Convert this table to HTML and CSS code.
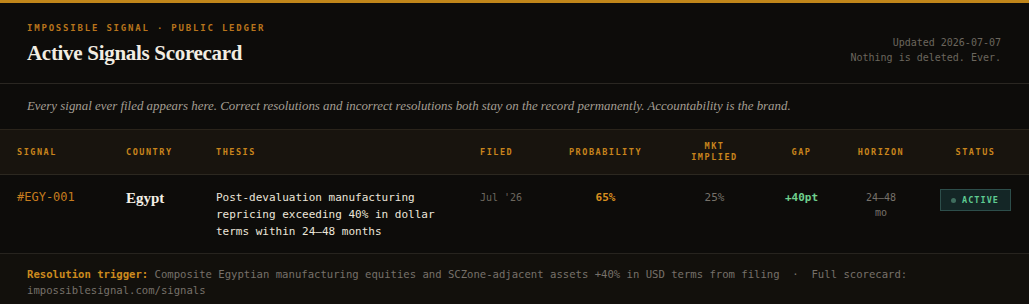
FILE: index.html
```html
<!DOCTYPE html>
<html lang="en">
<head>
<meta charset="utf-8">
<title>Active Signals Scorecard</title>
<link rel="stylesheet" href="styles.css">
</head>
<body>
<div class="page">
  <header class="top">
    <div class="brand">
      <div class="eyebrow">IMPOSSIBLE SIGNAL · PUBLIC LEDGER</div>
      <h1 class="title">Active Signals Scorecard</h1>
    </div>
    <div class="meta">
      <div>Updated 2026-07-07</div>
      <div>Nothing is deleted. Ever.</div>
    </div>
  </header>
  <p class="intro">Every signal ever filed appears here. Correct resolutions and incorrect resolutions both stay on the record permanently. Accountability is the brand.</p>
  <table class="ledger">
    <colgroup>
      <col class="c-signal"><col class="c-country"><col class="c-thesis"><col class="c-filed"><col class="c-prob"><col class="c-mkt"><col class="c-gap"><col class="c-hor"><col class="c-status">
    </colgroup>
    <thead>
      <tr>
        <th class="first left">SIGNAL</th>
        <th class="left">COUNTRY</th>
        <th class="left">THESIS</th>
        <th class="left">FILED</th>
        <th>PROBABILITY</th>
        <th>MKT<br>IMPLIED</th>
        <th>GAP</th>
        <th>HORIZON</th>
        <th>STATUS</th>
      </tr>
    </thead>
    <tbody>
      <tr>
        <td class="first left sig">#EGY-001</td>
        <td class="left country">Egypt</td>
        <td class="left thesis">Post-devaluation manufacturing repricing exceeding 40% in dollar terms within 24–48 months</td>
        <td class="left filed">Jul '26</td>
        <td class="prob">65%</td>
        <td class="mkt">25%</td>
        <td class="gap">+40pt</td>
        <td class="hor">24–48<br>mo</td>
        <td><span class="badge"><span class="dot"></span>ACTIVE</span></td>
      </tr>
    </tbody>
  </table>
  <footer class="foot"><strong class="trig">Resolution trigger:</strong> Composite Egyptian manufacturing equities and SCZone-adjacent assets +40% in USD terms from filing &nbsp;·&nbsp; Full scorecard: impossiblesignal.com/signals</footer>
</div>
</body>
</html>
```

FILE: styles.css
```css
html, body {
  margin: 0;
  padding: 0;
  background: #0d0c0a;
}
body {
  font-family: "DejaVu Sans Mono", "Liberation Mono", monospace;
  color: #e8e2d6;
}
.page {
  border-top: 3px solid #c0861a;
}
.top {
  display: flex;
  justify-content: space-between;
  align-items: flex-end;
  padding: 19px 28px 17px 27px;
  border-bottom: 1px solid #2a2722;
}
.eyebrow {
  font-size: 9px;
  line-height: 13px;
  letter-spacing: 0.2em;
  color: #b8741c;
  font-weight: bold;
}
.title {
  margin: 5px 0 0;
  font-family: "Liberation Serif", "DejaVu Serif", serif;
  font-weight: bold;
  font-size: 21px;
  line-height: 26px;
  color: #f2ede2;
  letter-spacing: -0.3px;
}
.meta {
  text-align: right;
  font-size: 10px;
  line-height: 15px;
  color: #6b665d;
  padding-bottom: 1px;
}
.intro {
  margin: 0;
  padding: 13px 27px 14px;
  font-family: "Liberation Serif", "DejaVu Serif", serif;
  font-style: italic;
  font-size: 12.9px;
  line-height: 18px;
  color: #a49e93;
  border-bottom: 1px solid #2a241b;
}
.ledger {
  width: 100%;
  border-collapse: collapse;
  table-layout: fixed;
}
.c-signal { width: 118px; }
.c-country { width: 90px; }
.c-thesis { width: 264px; }
.c-filed { width: 73px; }
.c-prob { width: 121px; }
.c-mkt { width: 97px; }
.c-gap { width: 77px; }
.c-hor { width: 82px; }
.c-status { width: 107px; }
thead tr {
  background: #18140e;
}
th {
  height: 44px;
  padding: 0 8px;
  font-size: 8.5px;
  line-height: 11px;
  letter-spacing: 0.18em;
  font-weight: bold;
  color: #c8841c;
  text-align: center;
  vertical-align: middle;
  border-bottom: 1px solid #2c2820;
}
.left { text-align: left; }
.first { padding-left: 17px; }
td {
  padding: 14px 8px 13px;
  vertical-align: top;
  text-align: center;
  font-size: 10px;
  line-height: 17px;
  border-bottom: 1px solid #27241f;
}
td.first { padding-left: 17px; }
.sig {
  font-size: 12px;
  color: #c67c1e;
}
.country {
  font-family: "Liberation Serif", "DejaVu Serif", serif;
  font-weight: bold;
  font-size: 15px;
  line-height: 20px;
  padding-top: 13px;
  color: #f4efe5;
}
.thesis {
  font-size: 11px;
  color: #ece6da;
}
.filed {
  color: #6c675e;
}
.prob {
  font-size: 11px;
  font-weight: bold;
  color: #d98f1f;
}
.mkt {
  font-size: 11px;
  color: #77726a;
}
.gap {
  font-size: 11px;
  font-weight: bold;
  color: #6fd08e;
}
.hor {
  color: #77726a;
  line-height: 15px;
  padding-top: 15px;
}
.badge {
  display: inline-flex;
  align-items: center;
  gap: 6px;
  padding: 4px 11px 4px 10px;
  border: 1px solid #2d4e4b;
  background: #142626;
  color: #5fcb92;
  font-size: 8.5px;
  line-height: 12px;
  font-weight: bold;
  letter-spacing: 0.12em;
}
.dot {
  width: 5px;
  height: 5px;
  border-radius: 50%;
  background: #3f6d5e;
}
.foot {
  background: #12100c;
  padding: 12px 27px 12px;
  font-size: 10.6px;
  line-height: 16px;
  color: #77716a;
}
.trig {
  color: #cc8a1e;
  font-weight: bold;
}
```
